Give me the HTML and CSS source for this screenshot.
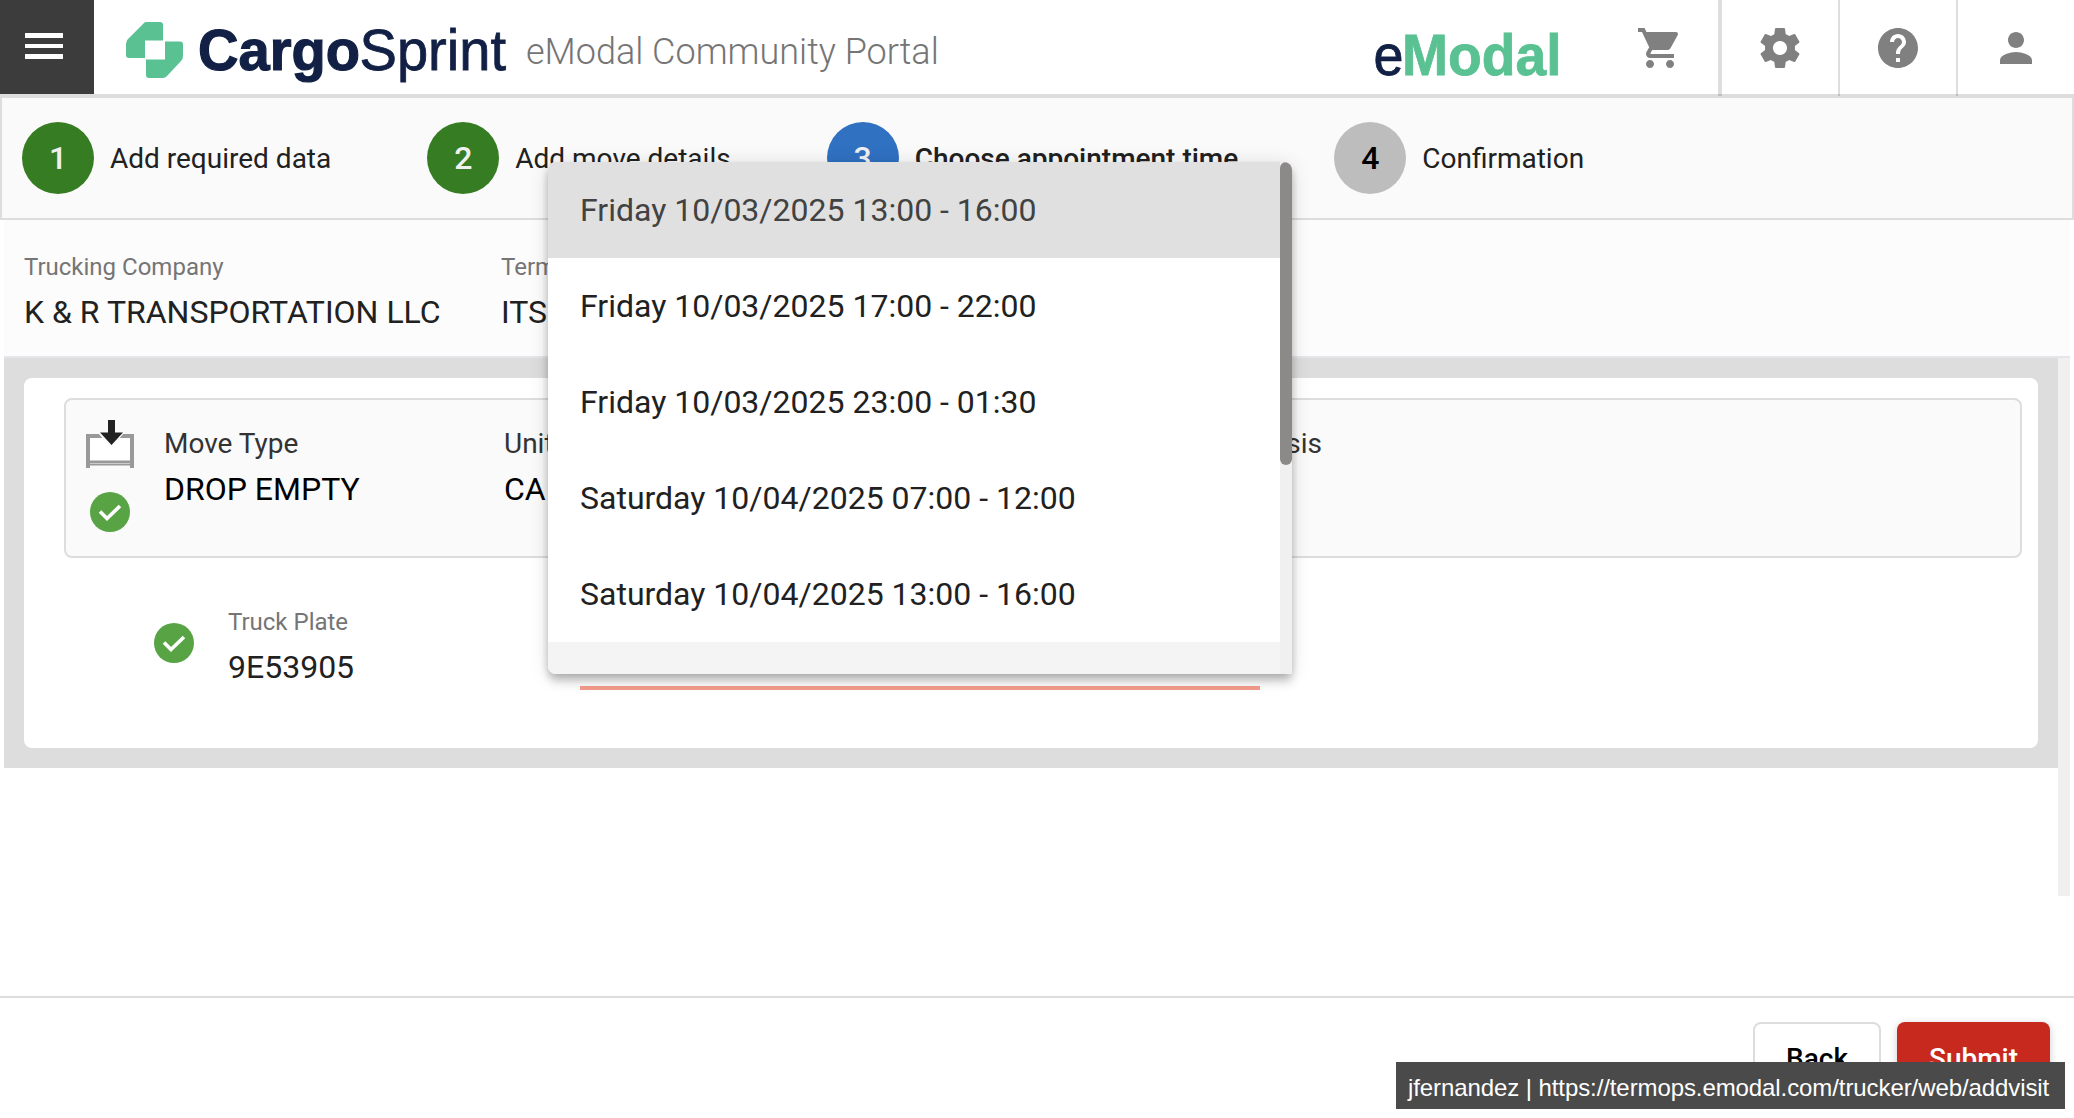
FILE: index.html
```html
<!DOCTYPE html>
<html lang="en">
<head>
<meta charset="utf-8">
<title>eModal Community Portal</title>
<link rel="stylesheet" href="styles.css">
</head>
<body>
<header class="topbar">
  <button class="menu" aria-label="Menu"><span></span><span></span><span></span></button>
  <svg class="brand" width="400" height="94" viewBox="0 0 400 94">
    <path fill="#59c192" d="M52 22h14q3 0 3 3v15.500H51V58H35q-3 0-3-3V44q0-3 2-5l15-15q1.500-2 3-2zM71 41.500h15q3 0 3 3V56q0 3-2 5L73 76q-2 2-4 2H55q-3 0-3-3V59.500h19z"/>
    <text class="brand-bold" x="104" y="69.500" textLength="162" lengthAdjust="spacingAndGlyphs">Cargo</text>
    <text class="brand-thin" x="265.500" y="69.500" textLength="146.500" lengthAdjust="spacingAndGlyphs">Sprint</text>
  </svg>
  <div class="portal">eModal Community Portal</div>
  <svg class="product" width="200" height="94" viewBox="0 0 200 94">
    <text class="product-thin" x="1.500" y="75" textLength="30" lengthAdjust="spacingAndGlyphs">e</text>
    <text class="product-bold" x="30" y="75" textLength="159.500" lengthAdjust="spacingAndGlyphs">Modal</text>
  </svg>
  <nav class="tools">
    <a class="tool cart"><svg viewBox="0 0 24 24"><path d="M7 18c-1.100 0-1.990.9-1.990 2S5.900 22 7 22s2-.9 2-2-.9-2-2-2zM1 2v2h2l3.600 7.590-1.350 2.450c-.16.280-.25.610-.25.960 0 1.100.9 2 2 2h12v-2H7.420c-.14 0-.25-.11-.25-.25l.03-.12.900-1.630h7.450c.75 0 1.410-.41 1.750-1.030l3.580-6.490c.08-.14.120-.31.120-.48 0-.55-.45-1-1-1H5.210l-.94-2H1zm16 16c-1.100 0-1.990.9-1.990 2s.89 2 1.990 2 2-.9 2-2-.9-2-2-2z"/></svg></a>
    <a class="tool"><svg viewBox="0 0 24 24"><path d="M19.430 12.980c.04-.32.070-.64.070-.98s-.03-.66-.07-.98l2.110-1.650c.19-.15.240-.42.120-.64l-2-3.460c-.12-.22-.39-.3-.61-.22l-2.490 1c-.52-.4-1.080-.73-1.690-.98l-.38-2.650C14.460 2.180 14.250 2 14 2h-4c-.25 0-.46.180-.49.420l-.38 2.650c-.61.250-1.170.59-1.690.98l-2.490-1c-.23-.09-.49 0-.61.220l-2 3.460c-.13.220-.07.490.12.640l2.110 1.650c-.04.320-.07.650-.07.980s.03.660.070.980l-2.110 1.650c-.19.150-.24.420-.12.640l2 3.460c.12.220.39.300.61.220l2.490-1c.52.400 1.080.730 1.690.980l.38 2.650c.03.240.240.420.490.420h4c.25 0 .46-.18.490-.42l.38-2.650c.61-.25 1.170-.59 1.690-.98l2.490 1c.23.090.490 0 .61-.22l2-3.460c.12-.22.070-.49-.12-.64l-2.110-1.650zM12 15.500c-1.930 0-3.500-1.570-3.500-3.500s1.570-3.500 3.500-3.500 3.500 1.570 3.500 3.500-1.570 3.500-3.500 3.500z"/></svg></a>
    <a class="tool"><svg viewBox="0 0 24 24"><path d="M12 2C6.480 2 2 6.480 2 12s4.480 10 10 10 10-4.480 10-10S17.520 2 12 2zm1 17h-2v-2h2v2zm2.070-7.750l-.9.920C13.450 12.900 13 13.500 13 15h-2v-.5c0-1.100.450-2.100 1.170-2.830l1.240-1.260c.37-.36.590-.86.590-1.410 0-1.100-.9-2-2-2s-2 .9-2 2H8c0-2.210 1.790-4 4-4s4 1.790 4 4c0 .88-.36 1.680-.93 2.250z"/></svg></a>
    <a class="tool"><svg viewBox="0 0 24 24"><path d="M12 12c2.210 0 4-1.790 4-4s-1.790-4-4-4-4 1.790-4 4 1.790 4 4 4zm0 2c-2.670 0-8 1.340-8 4v2h16v-2c0-2.660-5.330-4-8-4z"/></svg></a>
  </nav>
</header>

<ol class="stepper">
  <li class="step done"><span class="dot">1</span>Add required data</li>
  <li class="step done"><span class="dot">2</span>Add move details</li>
  <li class="step active"><span class="dot">3</span>Choose appointment time</li>
  <li class="step"><span class="dot">4</span>Confirmation</li>
</ol>

<section class="summary">
  <div class="field company"><span class="label">Trucking Company</span><span class="value">K &amp; R TRANSPORTATION LLC</span></div>
  <div class="field"><span class="label">Terminal</span><span class="value">ITS</span></div>
</section>

<main class="scroll">
  <div class="panel">
    <div class="card">
      <div class="move">
        <div class="move-icons">
          <svg width="48" height="48" viewBox="0 0 48 48"><path fill="#fff" d="M2 16h44v26H2z"/><path fill="#999" d="M0 14h48v34h-4v-2.500H4V48H0zM4 18v22.500h40V18z"/><path fill="#ccc" d="M4 43h40v1H4z"/><path fill="#fafafa" d="M12 13h26L25 28z"/><path fill="#222" d="M22 0h7v12.500h8L25.500 25 14 12.500h8z"/></svg>
          <svg width="40" height="40" viewBox="0 0 40 40"><circle cx="20" cy="20" r="20" fill="#58a445"/><path d="M10 19.500l7 7L30 14" fill="none" stroke="#fff" stroke-width="3.600"/></svg>
        </div>
        <div class="field move-type"><span class="label">Move Type</span><span class="value">DROP EMPTY</span></div>
        <div class="field unit"><span class="label">Unit</span><span class="value">CA</span></div>
        <div class="field"><span class="label">Chassis</span></div>
      </div>
      <div class="details">
        <svg class="ok" width="40" height="40" viewBox="0 0 40 40"><circle cx="20" cy="20" r="20" fill="#58a445"/><path d="M10 19.500l7 7L30 14" fill="none" stroke="#fff" stroke-width="3.600"/></svg>
        <div class="field plate"><span class="label">Truck Plate</span><span class="value">9E53905</span></div>
        <div class="slot"></div>
      </div>
    </div>
  </div>
  <div class="track"></div>
</main>

<footer class="actions">
  <button class="btn">Back</button>
  <button class="btn primary">Submit</button>
</footer>

<div class="options">
  <ul class="option-list">
    <li class="option selected">Friday 10/03/2025 13:00 - 16:00</li>
    <li class="option">Friday 10/03/2025 17:00 - 22:00</li>
    <li class="option">Friday 10/03/2025 23:00 - 01:30</li>
    <li class="option">Saturday 10/04/2025 07:00 - 12:00</li>
    <li class="option">Saturday 10/04/2025 13:00 - 16:00</li>
    <li class="option hover"></li>
  </ul>
  <div class="option-track"><div class="option-thumb"></div></div>
</div>

<div class="status">jfernandez | https://termops.emodal.com/trucker/web/addvisit</div>
</body>
</html>
```
FILE: styles.css
```css
* { box-sizing: border-box; }
body {
  margin: 0;
  width: 2074px;
  height: 1118px;
  overflow: hidden;
  position: relative;
  display: flex;
  flex-direction: column;
  background: #fff;
  color: #212121;
  font-family: Roboto, sans-serif;
}
ol, ul { list-style: none; margin: 0; padding: 0; }
svg { display: block; flex: none; }
button { font: inherit; }

.topbar { display: flex; height: 96px; border-bottom: 2px solid #ddd; flex: none; }
.menu {
  width: 94px; height: 94px; border: 0; background: #3c3c3c;
  display: flex; flex-direction: column; justify-content: center; gap: 6px;
  padding: 0 31px 2px 25px;
}
.menu span { height: 4.700px; background: #fff; }
.brand { overflow: visible; }
.brand text, .product text {
  font-family: "Liberation Sans", Arial, sans-serif; font-size: 57px;
  fill: #112044; stroke: #112044; stroke-width: .8px;
}
.brand .brand-bold { font-weight: 700; stroke-width: 1.200px; }
.product { overflow: visible; margin-left: auto; }
.product .product-bold { font-weight: 700; fill: #59c192; stroke: #59c192; }
.portal {
  margin-left: 32px; padding-top: 28px;
  font-size: 36px; line-height: 48px; font-weight: 300; color: #757575; white-space: nowrap;
}
.tools { display: flex; height: 96px; margin-left: 30px; }
.tool {
  width: 118px; display: flex; justify-content: center; align-items: center;
  border-left: 2px solid rgba(0, 0, 0, .13);
}
.tool svg { width: 48px; height: 48px; fill: #808080; }
.tool.cart { border-left: 0; border-right: 2px solid rgba(0, 0, 0, .13); }

.stepper {
  flex: none; display: flex; align-items: center; height: 124px;
  padding-left: 20px; border: 2px solid #ddd; background: #fafafa;
}
.step { display: flex; align-items: center; gap: 16px; font-size: 28px; margin-right: 96px; white-space: nowrap; }
.step.active { font-weight: 500; }
.dot {
  width: 72px; height: 72px; border-radius: 50%; background: #bdbdbd; color: #000;
  display: grid; place-items: center; font-size: 32px; font-weight: 500;
}
.done .dot { background: #367c22; color: #f0f0f0; }
.active .dot { background: #3071c2; color: #f0f0f0; }

.field { display: flex; flex-direction: column; gap: 9px; white-space: nowrap; }
.label { font-size: 24px; line-height: 32px; color: #757575; }
.value { font-size: 32px; line-height: 40px; }

.summary {
  flex: none; display: flex; height: 138px; margin: 0 4px; padding: 31px 20px 0;
  background: #fcfcfc; border-bottom: 2px solid #e5e5ea;
}
.company { width: 477px; }

.scroll { flex: none; display: flex; align-items: flex-start; height: 538px; margin: 0 4px; }
.panel { flex: 1; padding: 20px; background: #ddd; }
.track { width: 12px; height: 538px; background: #f0f0f0; }
.card { height: 370px; padding: 20px 16px 0 40px; border-radius: 8px; background: #fff; }
.move {
  display: flex; height: 160px; padding: 20px 20px 0;
  border: 2px solid #ddd; border-radius: 8px; background: #fafafa;
}
.move .field { padding-top: 8px; }
.move .label { font-size: 28px; color: #333; }
.move .value { color: #000; }
.move-icons { width: 78px; display: flex; flex-direction: column; gap: 24px; }
.move-icons svg + svg { margin-left: 4px; }
.move-type { width: 340px; }
.unit { width: 719px; }
.details { display: flex; padding: 48px 0 0 90px; }
.ok { margin: 17px 34px 0 0; }
.plate { width: 352px; }
.slot { width: 680px; height: 84px; border-bottom: 4px solid #f49c8c; }

.actions {
  flex: none; display: flex; justify-content: flex-end; gap: 16px; height: 122px;
  margin-top: 100px; padding: 24px 24px 0; border-top: 2px solid #ddd;
}
.btn {
  height: 72px; width: 128px; padding: 0; border: 2px solid #ddd; border-radius: 8px;
  background: #fff; color: #000; font-size: 28px; font-weight: 500;
}
.btn.primary {
  width: 153px; border: 0; background: #c7291e; color: #fff;
  box-shadow: 0 2px 8px rgba(0, 0, 0, .2);
}

.options {
  position: absolute; left: 548px; top: 162px; width: 744px; height: 512px;
  display: flex; overflow: hidden; border-radius: 8px 8px 2px 8px; background: #fff;
  box-shadow: 0 4px 8px -2px rgba(0, 0, 0, .2), 0 8px 10px rgba(0, 0, 0, .14), 0 2px 20px rgba(0, 0, 0, .12);
}
.option-list { flex: 1; }
.option { height: 96px; padding-left: 32px; font-size: 32px; line-height: 96px; white-space: nowrap; }
.option.selected { background: #e0e0e0; color: #424242; }
.option.hover { background: #f4f4f4; }
.option-track { width: 12px; background: #f0f0f0; }
.option-thumb { height: 303px; border-radius: 6px; background: #8c8989; }

.status {
  position: absolute; left: 1396px; top: 1062px; width: 669px; height: 47px;
  padding-left: 12px; background: #4a4a4a; color: #fff;
  font: 24px/51px "Liberation Sans", Arial, sans-serif; letter-spacing: -.090px; white-space: nowrap;
}
```
